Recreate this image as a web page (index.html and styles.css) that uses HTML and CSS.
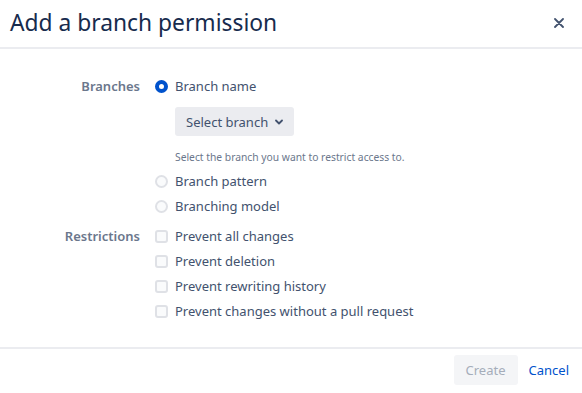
FILE: index.html
```html
<!DOCTYPE html>
<html lang="en">
<head>
    <meta charset="UTF-8">
    <title>Add a branch permission</title>
    <link rel="stylesheet" href="styles.css">
</head>
<body>
    <div class="dialog">
        <div class="dialog-header">
            <h1>Add a branch permission</h1>
            <button class="close-button" aria-label="Close">
                <svg width="10" height="10" viewBox="0 0 10 10">
                    <path d="M1 1 L9 9 M9 1 L1 9" stroke="#42526e" stroke-width="1.8" stroke-linecap="round"/>
                </svg>
            </button>
        </div>

        <div class="dialog-body">
            <div class="field-row">
                <div class="field-label">Branches</div>
                <div class="field-options">
                    <label class="option">
                        <span class="radio checked"></span>
                        Branch name
                    </label>
                    <div class="branch-select">
                        <button class="select-button">
                            Select branch
                            <svg width="8" height="6" viewBox="0 0 8 6">
                                <path d="M1 1.5 L4 4.5 L7 1.5" fill="none" stroke="#42526e" stroke-width="1.8" stroke-linecap="round" stroke-linejoin="round"/>
                            </svg>
                        </button>
                        <div class="help-text">Select the branch you want to restrict access to.</div>
                    </div>
                    <label class="option">
                        <span class="radio"></span>
                        Branch pattern
                    </label>
                    <label class="option">
                        <span class="radio"></span>
                        Branching model
                    </label>
                </div>
            </div>

            <div class="field-row restrictions">
                <div class="field-label">Restrictions</div>
                <div class="field-options">
                    <label class="option">
                        <span class="checkbox"></span>
                        Prevent all changes
                    </label>
                    <label class="option">
                        <span class="checkbox"></span>
                        Prevent deletion
                    </label>
                    <label class="option">
                        <span class="checkbox"></span>
                        Prevent rewriting history
                    </label>
                    <label class="option">
                        <span class="checkbox"></span>
                        Prevent changes without a pull request
                    </label>
                </div>
            </div>
        </div>

        <div class="dialog-footer">
            <button class="create-button" disabled>Create</button>
            <a href="#" class="cancel-link">Cancel</a>
        </div>
    </div>
</body>
</html>
```

FILE: styles.css
```css
* {
    margin: 0;
    padding: 0;
    box-sizing: border-box;
}

body {
    font-family: "Noto Sans", "Open Sans", sans-serif;
    background: #ffffff;
    color: #172b4d;
}

button {
    font-family: inherit;
    border: none;
    background: none;
}

.dialog {
    width: 582px;
    height: 393px;
    display: flex;
    flex-direction: column;
}

.dialog-header {
    height: 49px;
    display: flex;
    align-items: center;
    justify-content: space-between;
    padding: 0 16px 2px 10px;
    border-bottom: 2px solid #ebecf0;
}

h1 {
    font-size: 22.8px;
    font-weight: 400;
    color: #172b4d;
}

.close-button {
    width: 14px;
    height: 14px;
    display: flex;
    align-items: center;
    justify-content: center;
    cursor: pointer;
}

.dialog-body {
    flex: 1;
    padding-top: 27px;
}

.field-row {
    display: flex;
}

.restrictions {
    margin-top: 10px;
}

.field-label {
    width: 155px;
    text-align: right;
    padding-right: 15px;
    font-size: 13px;
    font-weight: 600;
    color: #6b778c;
    line-height: 20px;
}

.field-options {
    display: flex;
    flex-direction: column;
    gap: 5px;
}

.option {
    display: flex;
    align-items: center;
    gap: 7px;
    height: 20px;
    font-size: 13px;
    color: #42526e;
    cursor: pointer;
}

.radio,
.checkbox {
    width: 13px;
    height: 13px;
    border: 2px solid #dfe1e6;
    background: #fafbfc;
    flex-shrink: 0;
}

.radio {
    border-radius: 50%;
}

.radio.checked {
    background: #ffffff;
    border: 4px solid #0052cc;
}

.checkbox {
    border-radius: 3px;
}

.branch-select {
    padding-left: 20px;
    padding-top: 6px;
    padding-bottom: 2px;
}

.select-button {
    height: 29px;
    padding: 0 11px;
    display: flex;
    align-items: center;
    gap: 7px;
    background: #ebecf0;
    border-radius: 3px;
    font-size: 13px;
    color: #42526e;
    cursor: pointer;
}

.help-text {
    margin-top: 14px;
    font-size: 10.3px;
    color: #6b778c;
}

.dialog-footer {
    height: 46px;
    border-top: 2px solid #ebecf0;
    display: flex;
    align-items: center;
    justify-content: flex-end;
    gap: 11px;
    padding: 0 13px 2px 0;
}

.create-button {
    height: 30px;
    padding: 0 12px;
    background: #f4f5f7;
    border-radius: 3px;
    font-size: 13px;
    color: #a5adba;
}

.cancel-link {
    font-size: 13px;
    color: #0052cc;
    text-decoration: none;
}
```
